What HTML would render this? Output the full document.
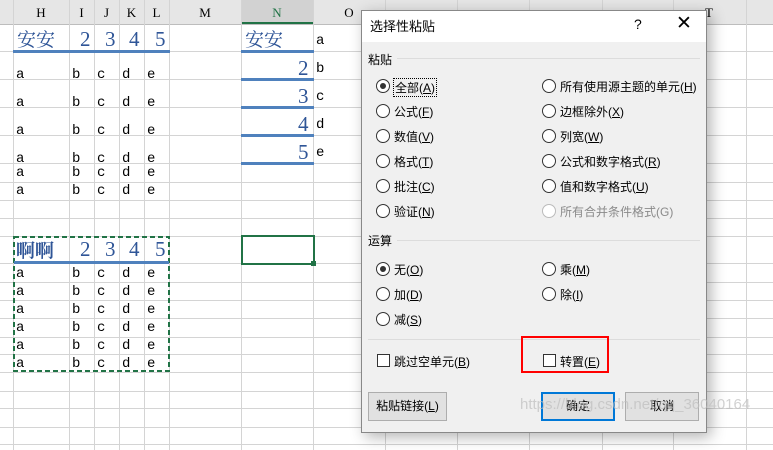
<!DOCTYPE html>
<html><head><meta charset="utf-8"><style>
*{margin:0;padding:0;box-sizing:border-box}
body{width:773px;height:450px;overflow:hidden;background:#fff;position:relative;font-family:"Liberation Serif","Noto Serif CJK SC",serif}
.a{position:absolute;white-space:nowrap}
.c{font-size:14px;color:#000;font-family:"Liberation Mono","Noto Sans CJK SC",monospace}
.h{font-size:13px;color:#000;top:5px;text-align:center}
.big{font-size:21px;color:#2f5597;font-family:"Liberation Serif","Noto Serif CJK SC",serif;font-style:normal}
.cjk{font-family:"Noto Serif CJK SC","Noto Sans CJK SC",serif;font-size:19px;font-style:normal;color:#2f5597}
.bl{position:absolute;background:#4f81bd;height:3px}
.d{font-family:"Liberation Sans","Noto Sans CJK SC",sans-serif;font-size:12px;color:#000}
.r{position:absolute;width:14px;height:14px;border:1px solid #333;border-radius:50%;background:#fff}
.r.on::after{content:"";position:absolute;left:3px;top:3px;width:6px;height:6px;border-radius:50%;background:#333}
.r.dis{border-color:#bbb}
.cb{position:absolute;width:13px;height:13px;border:1px solid #333;background:#fff}
.btn{position:absolute;height:29px;border:1px solid #adadad;background:#e1e1e1;text-align:center;line-height:27px}
u{text-decoration:underline}
</style></head><body>
<svg class="a" style="left:0;top:0" width="773" height="450">
<rect x="0" y="0" width="773" height="24" fill="#e6e6e6"/>
<rect x="241" y="0" width="72" height="24" fill="#d2d2d2"/>
<line x1="241" y1="23" x2="313" y2="23" stroke="#217346" stroke-width="2"/>
<g stroke="#d4d4d4" stroke-width="1">
<line x1="0" y1="24.5" x2="773" y2="24.5" stroke="#bdbdbd"/>
<line x1="0" y1="51.5" x2="773" y2="51.5"/><line x1="0" y1="79.5" x2="773" y2="79.5"/>
<line x1="0" y1="107.5" x2="773" y2="107.5"/><line x1="0" y1="135.5" x2="773" y2="135.5"/>
<line x1="0" y1="163.5" x2="773" y2="163.5"/><line x1="0" y1="182.5" x2="773" y2="182.5"/>
<line x1="0" y1="200.5" x2="773" y2="200.5"/><line x1="0" y1="218.5" x2="773" y2="218.5"/>
<line x1="0" y1="236.5" x2="773" y2="236.5"/><line x1="0" y1="263.5" x2="773" y2="263.5"/>
<line x1="0" y1="282.5" x2="773" y2="282.5"/><line x1="0" y1="300.5" x2="773" y2="300.5"/>
<line x1="0" y1="318.5" x2="773" y2="318.5"/><line x1="0" y1="337.5" x2="773" y2="337.5"/>
<line x1="0" y1="354.5" x2="773" y2="354.5"/><line x1="0" y1="372.5" x2="773" y2="372.5"/>
<line x1="0" y1="391.5" x2="773" y2="391.5"/><line x1="0" y1="408.5" x2="773" y2="408.5"/>
<line x1="0" y1="427.5" x2="773" y2="427.5"/><line x1="0" y1="444.5" x2="773" y2="444.5"/>
<line x1="13.5" y1="0" x2="13.5" y2="450"/><line x1="69.5" y1="0" x2="69.5" y2="450"/>
<line x1="94.5" y1="0" x2="94.5" y2="450"/><line x1="119.5" y1="0" x2="119.5" y2="450"/>
<line x1="144.5" y1="0" x2="144.5" y2="450"/><line x1="169.5" y1="0" x2="169.5" y2="450"/>
<line x1="241.5" y1="0" x2="241.5" y2="450"/><line x1="313.5" y1="0" x2="313.5" y2="450"/>
<line x1="385.5" y1="0" x2="385.5" y2="450"/><line x1="457.5" y1="0" x2="457.5" y2="450"/>
<line x1="529.5" y1="0" x2="529.5" y2="450"/><line x1="602.5" y1="0" x2="602.5" y2="450"/>
<line x1="673.5" y1="0" x2="673.5" y2="450"/><line x1="746.5" y1="0" x2="746.5" y2="450"/>
</g>
<rect x="14" y="237" width="155" height="134" fill="none" stroke="#217346" stroke-width="2" stroke-dasharray="5,3"/>
<rect x="242" y="236" width="72" height="28" fill="none" stroke="#217346" stroke-width="2"/>
<rect x="311" y="261" width="5" height="5" fill="#217346"/>
</svg>
<div class="a h" style="left:13px;width:56px">H</div><div class="a h" style="left:69px;width:25px">I</div>
<div class="a h" style="left:94px;width:25px">J</div><div class="a h" style="left:119px;width:25px">K</div>
<div class="a h" style="left:144px;width:25px">L</div><div class="a h" style="left:169px;width:72px">M</div>
<div class="a h" style="left:241px;width:72px;color:#217346">N</div><div class="a h" style="left:313px;width:72px">O</div>
<div class="a h" style="left:673px;width:72px">T</div>

<div class="a cjk" style="left:17px;top:25px">安安</div>
<div class="a big" style="left:80px;top:27px">2</div><div class="a big" style="left:105px;top:27px">3</div>
<div class="a big" style="left:129px;top:27px">4</div><div class="a big" style="left:155px;top:27px">5</div>
<div class="bl" style="left:13px;top:50px;width:157px"></div>
<div class="a cjk" style="left:245px;top:25px">安安</div>
<div class="bl" style="left:241px;top:50px;width:73px"></div>
<div class="a big" style="left:298px;top:56px">2</div><div class="bl" style="left:241px;top:78px;width:73px"></div>
<div class="a big" style="left:298px;top:84px">3</div><div class="bl" style="left:241px;top:106px;width:73px"></div>
<div class="a big" style="left:298px;top:112px">4</div><div class="bl" style="left:241px;top:134px;width:73px"></div>
<div class="a big" style="left:298px;top:140px">5</div><div class="bl" style="left:241px;top:162px;width:73px"></div>
<div class="a c" style="left:316px;top:33px">a</div><div class="a c" style="left:316px;top:61px">b</div>
<div class="a c" style="left:316px;top:89px">c</div><div class="a c" style="left:316px;top:117px">d</div>
<div class="a c" style="left:316px;top:145px">e</div>

<div class="a c" style="left:16px;top:61px;line-height:28px">a<br>a<br>a<br>a</div>
<div class="a c" style="left:72px;top:61px;line-height:28px">b<br>b<br>b<br>b</div>
<div class="a c" style="left:97px;top:61px;line-height:28px">c<br>c<br>c<br>c</div>
<div class="a c" style="left:122px;top:61px;line-height:28px">d<br>d<br>d<br>d</div>
<div class="a c" style="left:147px;top:61px;line-height:28px">e<br>e<br>e<br>e</div>
<div class="a c" style="left:16px;top:164px;line-height:18px">a<br>a</div>
<div class="a c" style="left:72px;top:164px;line-height:18px">b<br>b</div>
<div class="a c" style="left:97px;top:164px;line-height:18px">c<br>c</div>
<div class="a c" style="left:122px;top:164px;line-height:18px">d<br>d</div>
<div class="a c" style="left:147px;top:164px;line-height:18px">e<br>e</div>

<div class="a cjk" style="left:16px;top:236px;font-weight:bold">啊啊</div>
<div class="a big" style="left:80px;top:237px">2</div><div class="a big" style="left:105px;top:237px">3</div>
<div class="a big" style="left:129px;top:237px">4</div><div class="a big" style="left:155px;top:237px">5</div>
<div class="bl" style="left:14px;top:261px;width:155px"></div>
<div class="a c" style="left:16px;top:265px;line-height:18px">a<br>a<br>a<br>a<br>a<br>a</div>
<div class="a c" style="left:72px;top:265px;line-height:18px">b<br>b<br>b<br>b<br>b<br>b</div>
<div class="a c" style="left:97px;top:265px;line-height:18px">c<br>c<br>c<br>c<br>c<br>c</div>
<div class="a c" style="left:122px;top:265px;line-height:18px">d<br>d<br>d<br>d<br>d<br>d</div>
<div class="a c" style="left:147px;top:265px;line-height:18px">e<br>e<br>e<br>e<br>e<br>e</div>

<div class="a" style="left:361px;top:10px;width:346px;height:423px;background:#f0f0f0;border:1px solid #888;box-shadow:4px 4px 14px rgba(0,0,0,0.3)">
 <div style="position:absolute;left:0;top:0;width:344px;height:31px;background:#fff"></div>
</div>
<div class="a d" style="left:370px;top:16px;font-size:13px">选择性粘贴</div>
<div class="a d" style="left:634px;top:16px;font-size:14px">?</div>
<div class="a d" style="left:676px;top:12px;font-size:19px;font-weight:300">✕</div>
<div class="a d" style="left:368px;top:51px">粘贴</div>
<div class="a" style="left:397px;top:58px;width:303px;height:1px;background:#dcdcdc"></div>
<div class="r on" style="left:376px;top:79px"></div><div class="a d" style="left:393px;top:78px;border:1px dotted #000;padding:0 1px">全部(<u>A</u>)</div>
<div class="r" style="left:376px;top:104px"></div><div class="a d" style="left:394px;top:103px">公式(<u>F</u>)</div>
<div class="r" style="left:376px;top:129px"></div><div class="a d" style="left:394px;top:128px">数值(<u>V</u>)</div>
<div class="r" style="left:376px;top:154px"></div><div class="a d" style="left:394px;top:153px">格式(<u>T</u>)</div>
<div class="r" style="left:376px;top:179px"></div><div class="a d" style="left:394px;top:178px">批注(<u>C</u>)</div>
<div class="r" style="left:376px;top:204px"></div><div class="a d" style="left:394px;top:203px">验证(<u>N</u>)</div>
<div class="r" style="left:542px;top:79px"></div><div class="a d" style="left:560px;top:78px">所有使用源主题的单元(<u>H</u>)</div>
<div class="r" style="left:542px;top:104px"></div><div class="a d" style="left:560px;top:103px">边框除外(<u>X</u>)</div>
<div class="r" style="left:542px;top:129px"></div><div class="a d" style="left:560px;top:128px">列宽(<u>W</u>)</div>
<div class="r" style="left:542px;top:154px"></div><div class="a d" style="left:560px;top:153px">公式和数字格式(<u>R</u>)</div>
<div class="r" style="left:542px;top:179px"></div><div class="a d" style="left:560px;top:178px">值和数字格式(<u>U</u>)</div>
<div class="r dis" style="left:542px;top:204px"></div><div class="a d" style="left:560px;top:203px;color:#8a8a8a">所有合并条件格式(G)</div>
<div class="a d" style="left:368px;top:232px">运算</div>
<div class="a" style="left:397px;top:240px;width:303px;height:1px;background:#dcdcdc"></div>
<div class="r on" style="left:376px;top:262px"></div><div class="a d" style="left:394px;top:261px">无(<u>O</u>)</div>
<div class="r" style="left:376px;top:287px"></div><div class="a d" style="left:394px;top:286px">加(<u>D</u>)</div>
<div class="r" style="left:376px;top:312px"></div><div class="a d" style="left:394px;top:311px">减(<u>S</u>)</div>
<div class="r" style="left:542px;top:262px"></div><div class="a d" style="left:560px;top:261px">乘(<u>M</u>)</div>
<div class="r" style="left:542px;top:287px"></div><div class="a d" style="left:560px;top:286px">除(<u>I</u>)</div>
<div class="a" style="left:368px;top:339px;width:332px;height:1px;background:#dcdcdc"></div>
<div class="cb" style="left:377px;top:354px"></div><div class="a d" style="left:394px;top:353px">跳过空单元(<u>B</u>)</div>
<div class="a" style="left:521px;top:336px;width:88px;height:37px;border:2px solid #f00"></div>
<div class="cb" style="left:543px;top:354px"></div><div class="a d" style="left:560px;top:353px">转置(<u>E</u>)</div>
<div class="btn d" style="left:368px;top:392px;width:79px">粘贴链接(<u>L</u>)</div>
<div class="btn d" style="left:541px;top:392px;width:74px;border:2px solid #0078d7;line-height:25px">确定</div>
<div class="btn d" style="left:625px;top:392px;width:74px">取消</div>
<div class="a" style="left:520px;top:396px;font-family:'Liberation Sans',sans-serif;font-size:15px;color:rgba(190,190,190,0.7)">https://blog.csdn.net/qq_36040164</div>
</body></html>
